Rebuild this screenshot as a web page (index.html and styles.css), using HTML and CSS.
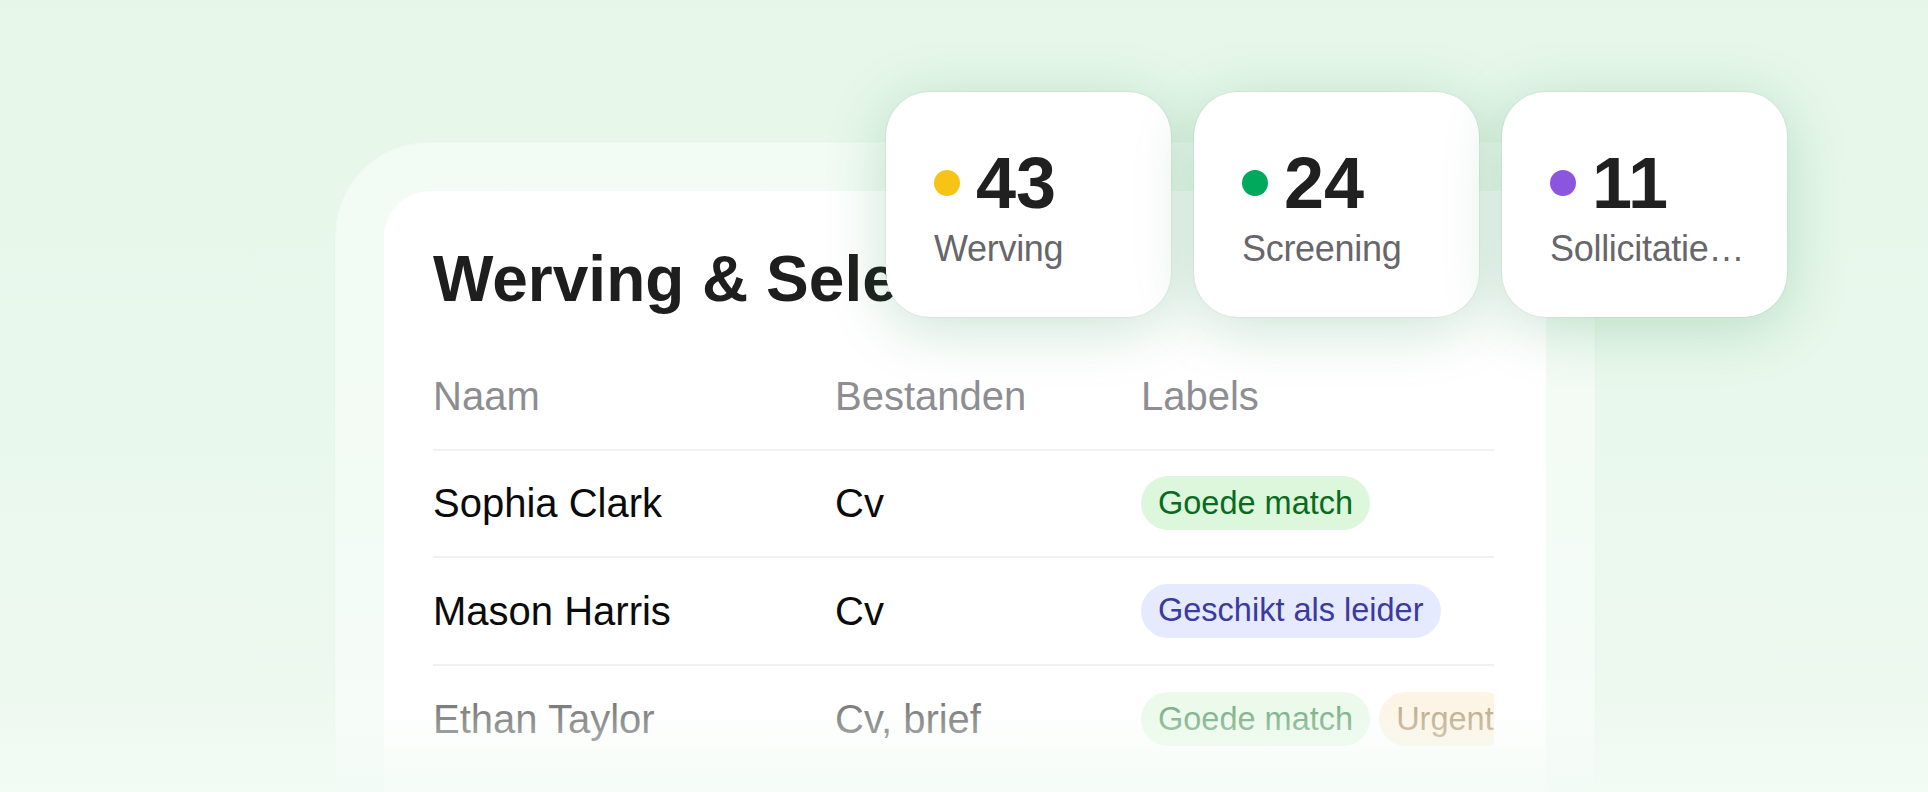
FILE: index.html
```html
<!DOCTYPE html>
<html lang="nl">
<head>
<meta charset="utf-8">
<title>Werving &amp; Selectie</title>
<link rel="stylesheet" href="styles.css">
</head>
<body>
<div class="stage">
  <div class="frame">
    <div class="card">
      <h1 class="title">Werving &amp; Selectie</h1>
      <div class="table">
        <div class="row head">
          <div class="cell">Naam</div>
          <div class="cell">Bestanden</div>
          <div class="cell">Labels</div>
        </div>
        <div class="row">
          <div class="cell name">Sophia Clark</div>
          <div class="cell">Cv</div>
          <div class="cell labels"><span class="pill green">Goede match</span></div>
        </div>
        <div class="row">
          <div class="cell name">Mason Harris</div>
          <div class="cell">Cv</div>
          <div class="cell labels"><span class="pill indigo">Geschikt als leider</span></div>
        </div>
        <div class="row faded">
          <div class="cell name">Ethan Taylor</div>
          <div class="cell">Cv, brief</div>
          <div class="cell labels"><span class="pill green">Goede match</span><span class="pill amber">Urgent</span></div>
        </div>
      </div>
    </div>
  </div>

  <div class="stats">
    <div class="stat">
      <div class="stat-top"><span class="dot yellow"></span><span class="num">43</span></div>
      <div class="stat-label">Werving</div>
    </div>
    <div class="stat">
      <div class="stat-top"><span class="dot green-dot"></span><span class="num">24</span></div>
      <div class="stat-label">Screening</div>
    </div>
    <div class="stat">
      <div class="stat-top"><span class="dot purple"></span><span class="num">11</span></div>
      <div class="stat-label">Sollicitatiegesprek</div>
    </div>
  </div>

  <div class="fade"></div>
</div>
</body>
</html>
```

FILE: styles.css
```css
body {
  margin: 0;
  background: #e8f8ec;
  font-family: "Liberation Sans", Arial, sans-serif;
}

.stage {
  position: relative;
  width: 1928px;
  height: 792px;
  overflow: hidden;
  background: linear-gradient(180deg, #e6f7ea 0%, #e9f8ec 55%, #eff9f1 100%);
}

.frame {
  margin: 143px 0 0 336px;
  width: 1258px;
  height: 760px;
  box-sizing: border-box;
  padding: 48px 48px 0;
  border-radius: 92px 92px 0 0;
  background: rgba(255, 255, 255, 0.45);
  box-shadow: 0 0 0 1px rgba(255, 255, 255, 0.5), 0 0 3px rgba(0, 90, 40, 0.07);
}

.card {
  height: 720px;
  box-sizing: border-box;
  padding: 56px 52px 0 49px;
  background: #ffffff;
  border-radius: 46px 46px 0 0;
}

.title {
  margin: 0;
  font-size: 64px;
  line-height: 1;
  font-weight: 700;
  color: #1e1e1e;
  white-space: nowrap;
}

.table {
  margin-top: 32px;
}

.row {
  display: grid;
  grid-template-columns: 402px 306px 1fr;
  align-items: center;
  height: 107.5px;
  box-sizing: border-box;
  border-bottom: 2px solid #f1f1f3;
  color: #0b0b0b;
}

.row.head {
  color: #8d8d92;
}

.row.faded {
  opacity: 0.55;
  border-bottom: none;
}

.cell {
  font-size: 40px;
  line-height: 1.2;
  white-space: nowrap;
}

.labels {
  display: flex;
  gap: 9px;
  overflow: hidden;
}

.pill {
  flex-shrink: 0;
  display: flex;
  align-items: center;
  height: 54px;
  padding: 0 17px;
  border-radius: 27px;
  font-size: 32.5px;
  line-height: 1.2;
}

.pill.green {
  background: #dcf7dc;
  color: #0a6b1f;
}

.pill.indigo {
  background: #e6eafe;
  color: #3b3a9e;
}

.pill.amber {
  background: #fbeed2;
  color: #8a6428;
}

.stats {
  position: absolute;
  left: 886px;
  top: 92px;
  display: flex;
  gap: 23px;
}

.stat {
  width: 285px;
  height: 225px;
  box-sizing: border-box;
  padding: 55px 34px 0 48px;
  background: #ffffff;
  border-radius: 44px;
  box-shadow: 0 0 0 1px rgba(0, 60, 20, 0.04), 0 10px 60px rgba(30, 140, 70, 0.24);
}

.stat-top {
  display: flex;
  align-items: center;
  gap: 16px;
  height: 72px;
}

.dot {
  width: 26px;
  height: 26px;
  border-radius: 50%;
  flex-shrink: 0;
}

.dot.yellow { background: #f6c416; }
.dot.green-dot { background: #00a95c; }
.dot.purple { background: #8b55e0; }

.num {
  font-size: 72px;
  line-height: 1;
  font-weight: 700;
  color: #202020;
}

.stat-label {
  margin-top: 8px;
  font-size: 36px;
  line-height: 1.2;
  letter-spacing: -0.3px;
  color: #66666b;
  white-space: nowrap;
  overflow: hidden;
  text-overflow: ellipsis;
}

.fade {
  position: absolute;
  left: 0;
  right: 0;
  bottom: 0;
  height: 90px;
  background: linear-gradient(180deg, rgba(243, 251, 245, 0) 0%, rgba(243, 251, 245, 0.85) 100%);
  pointer-events: none;
}
```
